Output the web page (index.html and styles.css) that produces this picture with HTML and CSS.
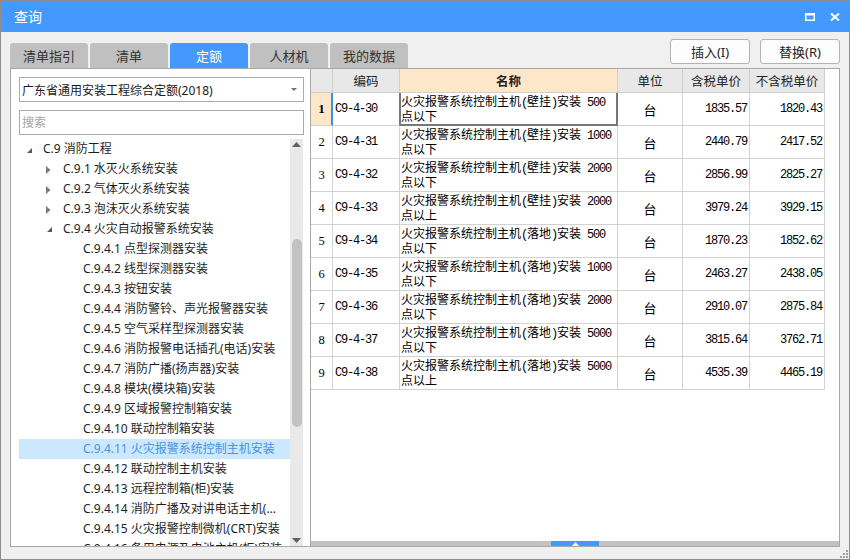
FILE: index.html
```html
<!DOCTYPE html>
<html lang="zh-CN">
<head>
<meta charset="utf-8">
<title>查询</title>
<link rel="stylesheet" href="styles.css">
</head>
<body>
<div class="win">
  <div class="titlebar">
    <span class="title">查询</span>
    <div class="winctl">
      <svg width="10" height="8" viewBox="0 0 10 8"><path d="M0 0H10V8H0Z M1.5 2.5H8.5V6.5H1.5Z" fill="#fff" fill-rule="evenodd"/></svg>
      <svg width="10" height="8" viewBox="0 0 10 8"><path d="M1 0.5L9 7.5M9 0.5L1 7.5" stroke="#fff" stroke-width="2"/></svg>
    </div>
  </div>
  <div class="toolbar">
    <div class="tabs">
      <div class="tab">清单指引</div>
      <div class="tab">清单</div>
      <div class="tab on">定额</div>
      <div class="tab">人材机</div>
      <div class="tab">我的数据</div>
    </div>
    <div class="btns">
      <button class="btn">插入(I)</button>
      <button class="btn">替换(R)</button>
    </div>
  </div>
  <div class="main">
    <div class="left">
      <div class="select">
        <span>广东省通用安装工程综合定额(2018)</span>
        <svg class="dd" width="6" height="3" viewBox="0 0 6 3"><path d="M0 0H6L3 3Z" fill="#6f6f6f"/></svg>
      </div>
      <div class="search">搜索</div>
      <div class="tree">
        <div class="list">
          <div class="row l1"><svg class="tri ex" width="5" height="5" viewBox="0 0 5 5"><path d="M5 0V5H0Z" fill="#5a5a5a"/></svg>C.9 消防工程</div>
          <div class="row l2"><svg class="tri co" width="5" height="8" viewBox="0 0 5 8"><path d="M0 0L4.5 4L0 8Z" fill="#7a7a7a"/></svg>C.9.1 水灭火系统安装</div>
          <div class="row l2"><svg class="tri co" width="5" height="8" viewBox="0 0 5 8"><path d="M0 0L4.5 4L0 8Z" fill="#7a7a7a"/></svg>C.9.2 气体灭火系统安装</div>
          <div class="row l2"><svg class="tri co" width="5" height="8" viewBox="0 0 5 8"><path d="M0 0L4.5 4L0 8Z" fill="#7a7a7a"/></svg>C.9.3 泡沫灭火系统安装</div>
          <div class="row l2"><svg class="tri ex" width="5" height="5" viewBox="0 0 5 5"><path d="M5 0V5H0Z" fill="#5a5a5a"/></svg>C.9.4 火灾自动报警系统安装</div>
          <div class="row l3">C.9.4.1 点型探测器安装</div>
          <div class="row l3">C.9.4.2 线型探测器安装</div>
          <div class="row l3">C.9.4.3 按钮安装</div>
          <div class="row l3">C.9.4.4 消防警铃、声光报警器安装</div>
          <div class="row l3">C.9.4.5 空气采样型探测器安装</div>
          <div class="row l3">C.9.4.6 消防报警电话插孔(电话)安装</div>
          <div class="row l3">C.9.4.7 消防广播(扬声器)安装</div>
          <div class="row l3">C.9.4.8 模块(模块箱)安装</div>
          <div class="row l3">C.9.4.9 区域报警控制箱安装</div>
          <div class="row l3">C.9.4.10 联动控制箱安装</div>
          <div class="row l3 sel">C.9.4.11 火灾报警系统控制主机安装</div>
          <div class="row l3">C.9.4.12 联动控制主机安装</div>
          <div class="row l3">C.9.4.13 远程控制箱(柜)安装</div>
          <div class="row l3">C.9.4.14 消防广播及对讲电话主机(柜)安装</div>
          <div class="row l3">C.9.4.15 火灾报警控制微机(CRT)安装</div>
          <div class="row l3">C.9.4.16 备用电源及电池主机(柜)安装</div>
        </div>
        <div class="vscroll">
          <svg class="arr" width="9" height="5" viewBox="0 0 9 5"><path d="M0 5H9L4.5 0Z" fill="#606060"/></svg>
          <div class="track"><div class="thumb"></div></div>
          <svg class="arr" width="9" height="5" viewBox="0 0 9 5"><path d="M0 0H9L4.5 5Z" fill="#606060"/></svg>
        </div>
      </div>
    </div>
    <div class="right">
      <div class="grid">
        <div class="tr th">
          <div></div><div>编码</div><div class="hl">名称</div><div>单位</div><div>含税单价</div><div>不含税单价</div>
        </div>
        <div class="tr cur">
          <div class="rn">1</div><div class="code">C9-4-30</div>
          <div class="name">火灾报警系统控制主机<span class="m">(</span>壁挂<span class="m">)</span>安装<span class="m"> 500</span><br>点以下</div>
          <div class="unit">台</div><div class="num">1835.57</div><div class="num">1820.43</div>
        </div>
        <div class="tr">
          <div class="rn">2</div><div class="code">C9-4-31</div>
          <div class="name">火灾报警系统控制主机<span class="m">(</span>壁挂<span class="m">)</span>安装<span class="m"> 1000</span><br>点以下</div>
          <div class="unit">台</div><div class="num">2440.79</div><div class="num">2417.52</div>
        </div>
        <div class="tr">
          <div class="rn">3</div><div class="code">C9-4-32</div>
          <div class="name">火灾报警系统控制主机<span class="m">(</span>壁挂<span class="m">)</span>安装<span class="m"> 2000</span><br>点以下</div>
          <div class="unit">台</div><div class="num">2856.99</div><div class="num">2825.27</div>
        </div>
        <div class="tr">
          <div class="rn">4</div><div class="code">C9-4-33</div>
          <div class="name">火灾报警系统控制主机<span class="m">(</span>壁挂<span class="m">)</span>安装<span class="m"> 2000</span><br>点以上</div>
          <div class="unit">台</div><div class="num">3979.24</div><div class="num">3929.15</div>
        </div>
        <div class="tr">
          <div class="rn">5</div><div class="code">C9-4-34</div>
          <div class="name">火灾报警系统控制主机<span class="m">(</span>落地<span class="m">)</span>安装<span class="m"> 500</span><br>点以下</div>
          <div class="unit">台</div><div class="num">1870.23</div><div class="num">1852.62</div>
        </div>
        <div class="tr">
          <div class="rn">6</div><div class="code">C9-4-35</div>
          <div class="name">火灾报警系统控制主机<span class="m">(</span>落地<span class="m">)</span>安装<span class="m"> 1000</span><br>点以下</div>
          <div class="unit">台</div><div class="num">2463.27</div><div class="num">2438.05</div>
        </div>
        <div class="tr">
          <div class="rn">7</div><div class="code">C9-4-36</div>
          <div class="name">火灾报警系统控制主机<span class="m">(</span>落地<span class="m">)</span>安装<span class="m"> 2000</span><br>点以下</div>
          <div class="unit">台</div><div class="num">2910.07</div><div class="num">2875.84</div>
        </div>
        <div class="tr">
          <div class="rn">8</div><div class="code">C9-4-37</div>
          <div class="name">火灾报警系统控制主机<span class="m">(</span>落地<span class="m">)</span>安装<span class="m"> 5000</span><br>点以下</div>
          <div class="unit">台</div><div class="num">3815.64</div><div class="num">3762.71</div>
        </div>
        <div class="tr">
          <div class="rn">9</div><div class="code">C9-4-38</div>
          <div class="name">火灾报警系统控制主机<span class="m">(</span>落地<span class="m">)</span>安装<span class="m"> 5000</span><br>点以上</div>
          <div class="unit">台</div><div class="num">4535.39</div><div class="num">4465.19</div>
        </div>
      </div>
      <div class="splitter">
        <div class="handle"><svg width="7" height="4" viewBox="0 0 7 4"><path d="M0 4H7L3.5 0Z" fill="#fff"/></svg></div>
      </div>
    </div>
  </div>
  <svg class="grip" width="10" height="10" viewBox="0 0 10 10">
    <rect x="8" y="2" width="2" height="2" fill="#a0a0a0"/>
    <rect x="5" y="5" width="2" height="2" fill="#a0a0a0"/>
    <rect x="8" y="5" width="2" height="2" fill="#a0a0a0"/>
    <rect x="2" y="8" width="2" height="2" fill="#a0a0a0"/>
    <rect x="5" y="8" width="2" height="2" fill="#a0a0a0"/>
    <rect x="8" y="8" width="2" height="2" fill="#a0a0a0"/>
  </svg>
</div>
</body>
</html>
```
FILE: styles.css
```css
* { box-sizing: border-box; margin: 0; padding: 0; }
html, body { width: 850px; height: 560px; overflow: hidden; }
body {
  font-family: "Noto Sans", "Noto Sans CJK SC", sans-serif;
  font-size: 12px;
  color: #222;
  background: #f0f0f0;
}
.win {
  position: relative;
  width: 850px;
  height: 560px;
  border: 1px solid #8d8d8d;
  background: #f0f0f0;
  display: flex;
  flex-direction: column;
}
.titlebar {
  height: 31px;
  flex: none;
  background: #4499fe;
  display: flex;
  align-items: center;
  justify-content: space-between;
  padding: 0 9px 0 13px;
  color: #fff;
}
.title { font-size: 14px; line-height: 31px; font-family: "Noto Sans CJK SC", sans-serif; }
.winctl { display: flex; gap: 15px; align-items: center; padding-top: 1px; }
.toolbar {
  height: 36px;
  flex: none;
  display: flex;
  justify-content: space-between;
  padding: 0 9px;
}
.tabs { display: flex; gap: 2px; align-self: flex-end; }
.tab {
  width: 78px;
  height: 25px;
  background: #c0c0c0;
  border-radius: 3px 3px 0 0;
  text-align: center;
  line-height: 25px;
  font-size: 13px;
  color: #333;
  font-family: "Noto Sans CJK SC", sans-serif;
}
.tab.on { background: #4499fe; color: #fff; }
.btns { display: flex; gap: 10px; padding-top: 7px; }
.btn {
  width: 80px;
  height: 25px;
  border: 1px solid #b3b3b3;
  border-radius: 3px;
  background: #fdfdfd;
  font-family: "Noto Sans", "Noto Sans CJK SC", sans-serif;
  font-size: 13px;
  color: #222;
}
.main { height: 479px; flex: none; margin: 0 9px; display: flex; }
.left {
  width: 301px;
  flex: none;
  border: 1px solid #a8a8a8;
  background: #fff;
  display: flex;
  flex-direction: column;
  padding: 8px 6px 0 8px;
}
.select {
  height: 25px;
  flex: none;
  border: 1px solid #ababab;
  display: flex;
  align-items: center;
  justify-content: space-between;
  padding: 0 6px 0 2px;
  font-size: 12px;
  color: #1a1a1a;
}
.search {
  height: 25px;
  flex: none;
  margin-top: 8px;
  border: 1px solid #ababab;
  padding-left: 2px;
  line-height: 23px;
  color: #a6a6a6;
  font-size: 12px;
}
.tree { flex: 1; min-height: 0; margin-top: 4px; margin-right: 1px; display: flex; }
.list { flex: 1; min-width: 0; overflow: hidden; }
.row {
  position: relative;
  height: 20px;
  line-height: 20px;
  white-space: nowrap;
  overflow: hidden;
  text-overflow: ellipsis;
  color: #1e1e1e;
  padding-right: 4px;
}
.row.l1 { padding-left: 24px; }
.row.l2 { padding-left: 44px; }
.row.l3 { padding-left: 64px; }
.row.sel { background: #cce8ff; color: #4a92df; }
.tri { position: absolute; }
.l1 .tri.ex { left: 8px; top: 9px; }
.l2 .tri.ex { left: 28px; top: 8px; }
.l2 .tri.co { left: 27px; top: 7px; }
.vscroll {
  width: 13px;
  flex: none;
  background: #e9e9e9;
  display: flex;
  flex-direction: column;
  align-items: center;
}
.vscroll .arr { flex: none; margin: 3px 0; }
.track { flex: 1; width: 100%; padding: 89px 1px 108px 2px; }
.thumb { width: 10px; height: 100%; background: #c2c2c2; border-radius: 5px; }
.right {
  width: 529px;
  flex: none;
  border: 1px solid #a8a8a8;
  border-left: none;
  background: #fff;
  display: flex;
  flex-direction: column;
}
.grid { flex: 1; }
.tr {
  display: grid;
  grid-template-columns: 22px 67px 218px 65px 67px 75px;
  width: 514px;
  height: 33px;
  color: #000;
}
.tr > div {
  border-right: 1px solid #d2d2d2;
  border-bottom: 1px solid #d2d2d2;
  overflow: hidden;
}
.tr.th { height: 24px; }
.tr.th > div {
  background: #e8e8e8;
  display: flex;
  align-items: center;
  justify-content: center;
  font-family: "Noto Sans CJK SC", sans-serif;
  font-size: 12.5px;
  color: #222;
  border-color: #cfcfcf;
}
.tr.th > div.hl { background: #fde7c8; font-weight: bold; }
.rn {
  display: flex;
  align-items: center;
  justify-content: center;
  font-family: "Liberation Serif", serif;
  font-size: 12.5px;
}
.cur .rn { background: #fde7c8; font-weight: bold; font-size: 13px; border-right: 1px solid #3b8ff0 !important; box-shadow: inset -1px 0 #3b8ff0; }
.code {
  display: flex;
  align-items: center;
  padding-left: 2px;
  font-family: "Liberation Mono", monospace;
  font-size: 12px;
  letter-spacing: -1.2px;
}
.name {
  font-family: "Noto Sans CJK SC", sans-serif;
  font-size: 12px;
  line-height: 15px;
  padding-left: 1px;
  white-space: nowrap;
}
.m { font-family: "Liberation Mono", monospace; font-size: 12px; letter-spacing: -1.2px; line-height: 8px; }
.unit {
  display: flex;
  align-items: center;
  justify-content: center;
  font-family: "Noto Sans CJK SC", sans-serif;
  font-size: 13px;
}
.num {
  display: flex;
  align-items: center;
  justify-content: flex-end;
  padding-right: 2px;
  font-family: "Liberation Mono", monospace;
  font-size: 12px;
  letter-spacing: -1.2px;
}
.cur .code { border-right-color: #777 !important; }
.cur .name {
  border-right-color: #777 !important;
  border-bottom-color: #777 !important;
  box-shadow: inset 1px 0 #777, inset -1px 0 #777, inset 0 -1px #777;
}
.splitter {
  height: 5px;
  flex: none;
  background: #c2c2c2;
  display: flex;
  justify-content: center;
}
.handle {
  width: 48px;
  height: 5px;
  background: #4499fe;
  display: flex;
  align-items: center;
  justify-content: center;
}
.handle svg { display: block; }
.grip { position: absolute; right: 1px; bottom: 1px; }
```
